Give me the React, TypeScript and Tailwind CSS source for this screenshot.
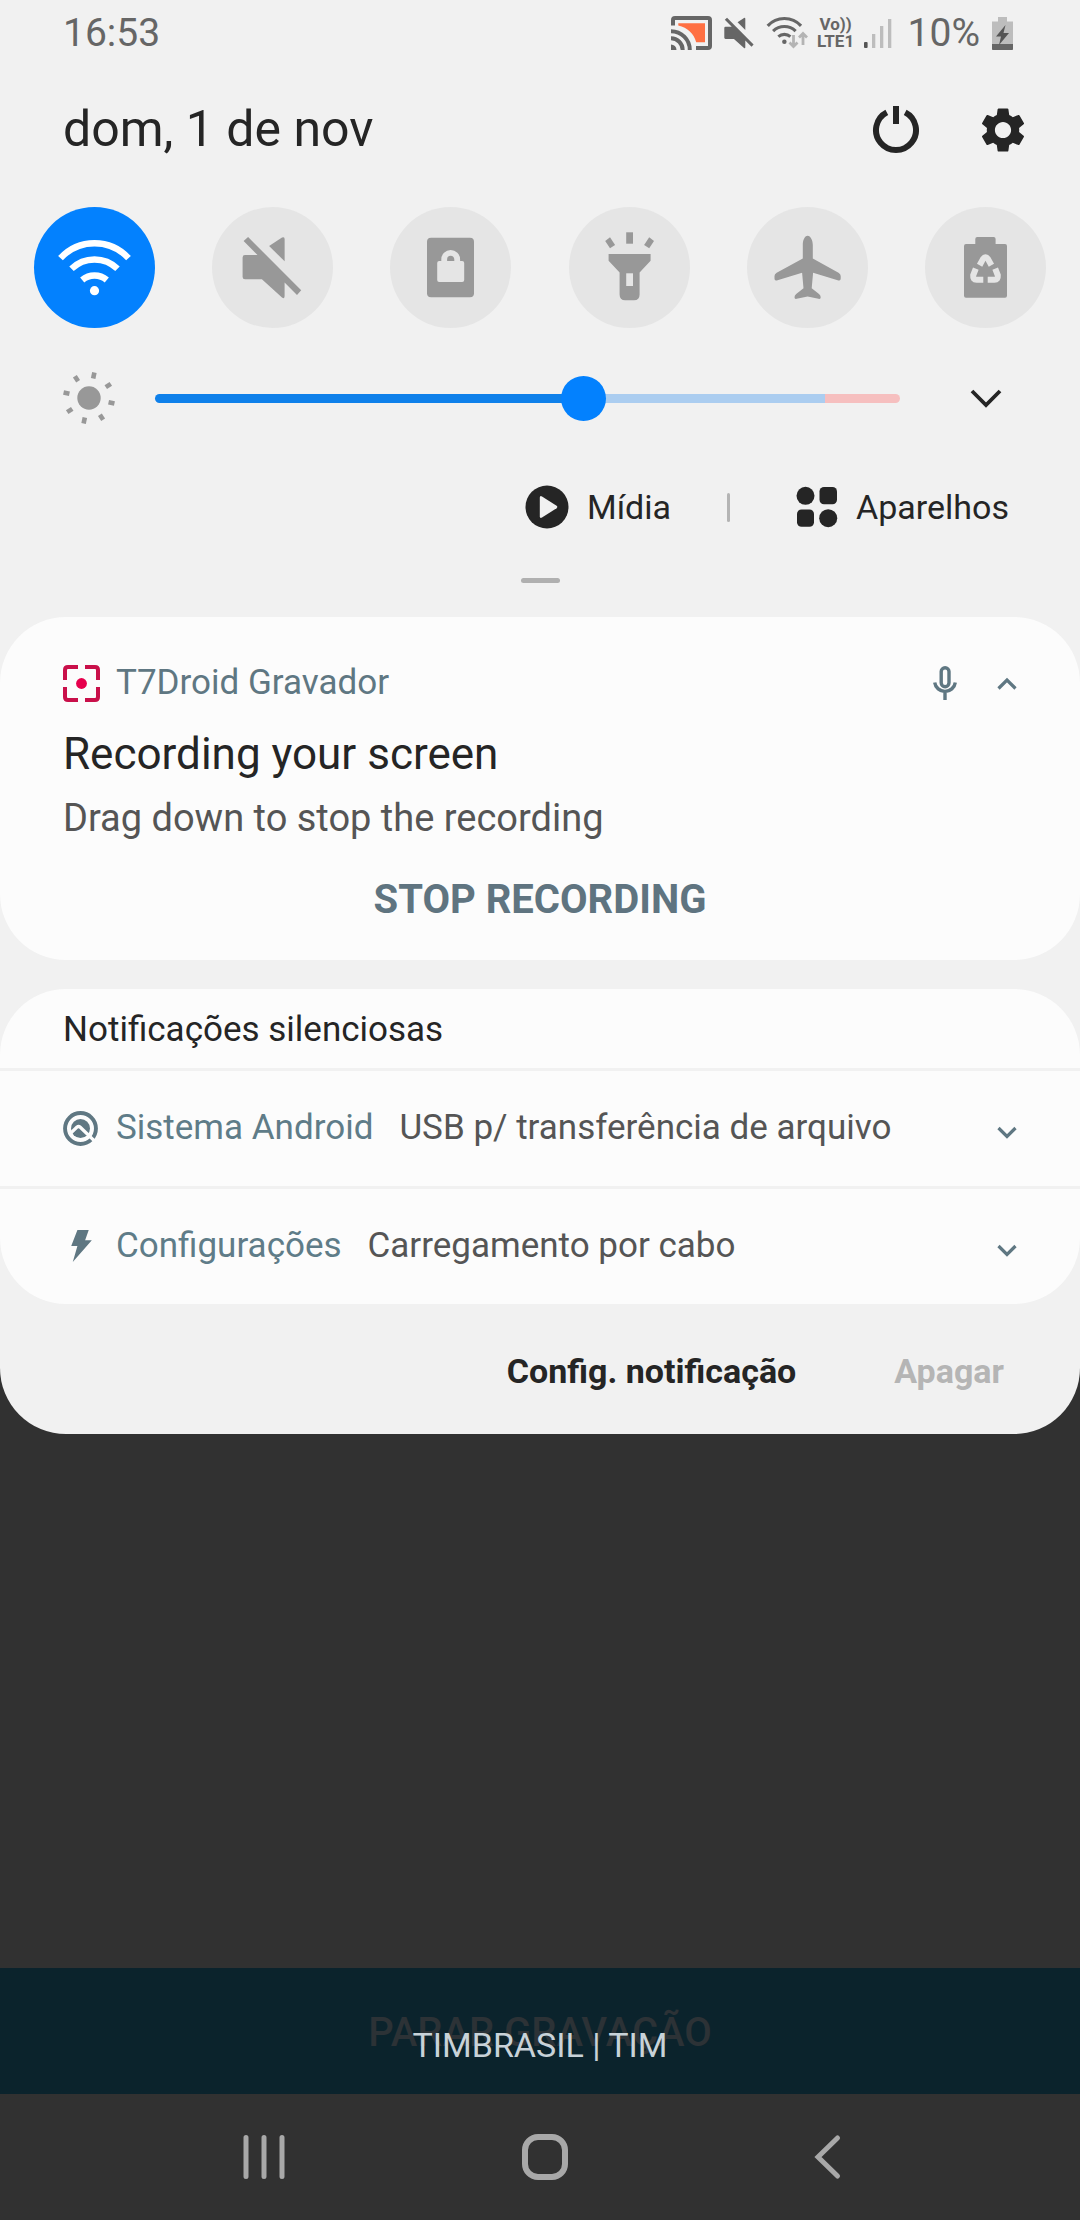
import { useState } from "react";
import { MdSettings } from "react-icons/md";

interface Tile {
    id: string;
    label: string;
    icon: React.ReactNode;
}

const WifiShape = () => (
    <>
        <g fill="none" stroke="currentColor" strokeWidth="6.4">
            <path d="M26.5 51.2A46 46 0 0 1 94.5 51.2" />
            <path d="M37.5 61.8A33 33 0 0 1 83.5 61.8" />
            <path d="M48.2 73A19 19 0 0 1 72.8 73" />
        </g>
        <circle cx="60.5" cy="83.7" r="4.6" fill="currentColor" />
    </>
);

const MuteShape = () => (
    <g fill="currentColor">
        <path d="M57.1 39L70 30.6Q72.6 29.2 72.6 32V54.3z" />
        <path d="M33 48H45.5L31.6 34L36.1 30L89.2 83.3L85 88L72.6 75.5V89Q72.6 92.4 70 90.4L49.9 72.3H33Q30.6 72.3 30.6 70V50.4Q30.6 48 33 48z" />
    </g>
);

const tiles: Tile[] = [
    { id: "wifi", label: "Wi-Fi", icon: <WifiShape /> },
    { id: "sound", label: "Mudo", icon: <MuteShape /> },
    {
        id: "rotation",
        label: "Retrato",
        icon: (
            <>
                <rect x="37" y="30.7" width="47" height="59.5" rx="4" fill="currentColor" />
                <rect x="47.2" y="54" width="27" height="21" rx="2" fill="#e5e5e5" />
                <path d="M54.2 56V52.4A6.5 6.5 0 0 1 67.2 52.4V56" fill="none" stroke="#e5e5e5" strokeWidth="5.8" />
            </>
        ),
    },
    {
        id: "torch",
        label: "Lanterna",
        icon: (
            <>
                <g fill="currentColor">
                    <path d="M39.6 47H81.6V53.7L70.6 65.5V87.5Q70.6 93.3 65 93.3H56.2Q50.6 93.3 50.6 87.5V65.5L39.6 53.7z" />
                    <path d="M57.2 25.3H64V36.7H57.2z" />
                    <path d="M36.2 34L41 30.3L46.1 38L41 41.3z" />
                    <path d="M85 34L80.2 30.3L75.1 38L80.2 41.3z" />
                </g>
                <path d="M57.2 66.3H64V79H57.2z" fill="#e5e5e5" />
            </>
        ),
    },
    {
        id: "airplane",
        label: "Modo avião",
        icon: (
            <path
                d="M60.6 28.8C63.6 28.8 65.8 33.5 65.8 38V51.4L91.5 65.8Q93.7 67.2 93.7 69V71.5Q93.7 74 91.5 73.4L66.1 65.8L64.7 81.3L72 87Q73.7 88.3 73.7 90.2Q73.7 92.4 71.5 91.8L60.6 89.6L49.7 91.8Q47.5 92.4 47.5 90.2Q47.5 88.3 49.2 87L56.5 81.3L55.1 65.8L29.7 73.4Q27.5 74 27.5 71.5V69Q27.5 67.2 29.7 65.8L55.8 51.4V38C55.8 33.5 57.6 28.8 60.6 28.8z"
                fill="currentColor"
            />
        ),
    },
    {
        id: "battery",
        label: "Economia de energia",
        icon: (
            <>
                <path
                    d="M52.3 30H68.6Q70.6 30 70.6 32V37H80Q82 37 82 39V88.7Q82 90.7 80 90.7H41Q39 90.7 39 88.7V39Q39 37 41 37H50.3V32Q50.3 30 52.3 30z"
                    fill="currentColor"
                />
                <g fill="none" stroke="#e5e5e5" strokeWidth="6">
                    <path d="M54.6 58.2L58 52Q60.5 48.4 63 52L66.4 58.2" />
                    <path d="M50.8 61.6L48.2 68.3Q47.8 72.8 51.5 72.8H58.3" />
                    <path d="M70.2 61.6L72.8 68.3Q73.2 72.8 69.5 72.8H62.7" />
                </g>
            </>
        ),
    },
];

const silent = [
    {
        app: "Sistema Android",
        text: "USB p/ transferência de arquivo",
        icon: (
            <>
                <circle cx="17" cy="17" r="15" fill="none" stroke="currentColor" strokeWidth="3.8" />
                <circle cx="17" cy="17" r="9.2" fill="currentColor" />
                <path d="M7 22L13.6 15.6Q15.2 14.4 16.8 15.8L31 29.5" fill="none" stroke="#fcfcfc" strokeWidth="3.2" />
            </>
        ),
    },
    {
        app: "Configurações",
        text: "Carregamento por cabo",
        icon: <path d="M14 1H25L21.5 11H28L9.5 32L14 16.5H8z" fill="currentColor" />,
    },
];

const Chevron = ({ up = false }: { up?: boolean }) => (
    <svg viewBox="0 0 20 20" className="size-5 text-[#5f7782]">
        <path d={up ? "M1.5 15.5L10 7L18.5 15.5" : "M1.5 9L10 17.5L18.5 9"} fill="none" stroke="currentColor" strokeWidth="3.2" />
    </svg>
);

function StatusBar() {
    return (
        <header className="flex h-[66px] items-center justify-between pl-[63px] pr-[67px] text-[39px] text-[#666]">
            <time>16:53</time>
            <div className="flex items-center">
                <svg viewBox="0 0 41 34" className="h-[34px] w-[41px]">
                    <path d="M7.3 7.3H34V26.3H25.2C23 17.5 16.5 11.5 7.3 9.4z" fill="#ff7043" />
                    <g fill="none" stroke="#666" strokeWidth="4">
                        <path d="M2 9.5V4Q2 2 4 2H37Q39 2 39 4V30Q39 32 37 32H25" />
                        <path d="M0 15.2A18.8 18.8 0 0 1 18.8 34" />
                        <path d="M0 22.3A11.7 11.7 0 0 1 11.7 34" />
                    </g>
                    <path d="M0 28.5A5.5 5.5 0 0 1 5.5 34H0z" fill="#666" />
                </svg>
                <svg viewBox="30 29 60 63" className="ml-3 h-8 w-[30px]">
                    <MuteShape />
                </svg>
                <svg viewBox="0 0 42 34" className="ml-3 h-[34px] w-[42px]">
                    <g transform="scale(.49) translate(-23 -31)">
                        <WifiShape />
                    </g>
                    <g fill="none" stroke="#b4b4b4" strokeWidth="2.8">
                        <path d="M27.5 19V30M23.5 26.5L27.5 30.5L31.5 26.5" />
                        <path d="M37 29V18M33 21.5L37 17.5L41 21.5" />
                    </g>
                </svg>
                <div className="ml-2 flex w-10 flex-col items-center text-[17px] font-bold leading-[17px]">
                    <span>Vo))</span>
                    <span>LTE1</span>
                </div>
                <svg viewBox="0 0 28 30" className="ml-2 h-[30px] w-7">
                    <rect y="24" width="3.6" height="6" rx="1" fill="#555" />
                    <path d="M8 16H11.3V30H8zM16 8H19.3V30H16zM24 1H27.3V30H24z" fill="#bdbdbd" />
                </svg>
                <span className="ml-4">10%</span>
                <svg viewBox="0 0 21 33" className="ml-3 h-[33px] w-[21px]">
                    <path d="M6 0H15V4.5H21V32Q21 33 20 33H1Q0 33 0 32V4.5H6z" fill="#bdbdbd" />
                    <path d="M0 27H21V32Q21 33 20 33H1Q0 33 0 32z" fill="#666" />
                    <path d="M13.5 8L4 19.5H9L7 28L17 16H11.5z" fill="#555" />
                </svg>
            </div>
        </header>
    );
}

export default function App() {
    const [active, setActive] = useState<string[]>(["wifi"]);
    const [brightness, setBrightness] = useState(58);

    const toggle = (id: string) => {
        setActive((prev) => (prev.includes(id) ? prev.filter((t) => t !== id) : [...prev, id]));
    };

    return (
        <div className="flex min-h-screen flex-col bg-[#313131] font-['Roboto',sans-serif] text-[#252525]">

            {/* PANEL */}
            <div className="rounded-b-[66px] bg-[#f1f1f1]">
                <StatusBar />

                <div className="flex h-[127px] items-center justify-between pl-[63px] pr-[50px]">
                    <h1 className="text-[50px]">dom, 1 de nov</h1>
                    <div className="flex items-center gap-14">
                        <button aria-label="Desligar">
                            <svg viewBox="0 0 48 48" className="size-12">
                                <path d="M14.8 6.3A20 20 0 1 0 33.2 6.3" fill="none" stroke="currentColor" strokeWidth="6" />
                                <path d="M21 0H27V18H21z" fill="currentColor" />
                            </svg>
                        </button>
                        <button aria-label="Configurações">
                            <MdSettings className="size-[54px]" />
                        </button>
                    </div>
                </div>

                {/* QUICK SETTINGS */}
                <div className="mt-[14px] flex justify-between px-[34px]">
                    {tiles.map((tile) => (
                        <button
                            key={tile.id}
                            aria-label={tile.label}
                            aria-pressed={active.includes(tile.id)}
                            onClick={() => toggle(tile.id)}
                            className={`size-[121px] rounded-full ${active.includes(tile.id) ? "bg-[#0381fe] text-white" : "bg-[#e5e5e5] text-[#989898]"
                                }`}
                        >
                            <svg viewBox="0 0 121 121" className="size-full">{tile.icon}</svg>
                        </button>
                    ))}
                </div>

                {/* BRIGHTNESS */}
                <div className="flex h-[140px] items-center pl-[62px] pr-[78px]">
                    <svg viewBox="-27 -27 54 54" className="size-[54px] shrink-0 text-[#989898]">
                        <circle r="11.7" fill="currentColor" />
                        <g fill="currentColor">
                            {[12, 57, 102, 147, 192, 237, 282, 327].map((deg) => (
                                <rect key={deg} x="-2.3" y="-26" width="4.6" height="6" transform={`rotate(${deg})`} />
                            ))}
                        </g>
                    </svg>
                    <input
                        type="range"
                        aria-label="Brilho"
                        value={brightness}
                        onChange={(e) => setBrightness(Number(e.target.value))}
                        style={{ "--level": `${brightness}%` } as React.CSSProperties}
                        className="ml-[39px] h-11 min-w-0 flex-1 appearance-none bg-transparent
                        [&::-webkit-slider-runnable-track]:h-[9px] [&::-webkit-slider-runnable-track]:rounded-full
                        [&::-webkit-slider-runnable-track]:bg-[linear-gradient(to_right,#0f80ea_var(--level),#abcdf0_var(--level),#abcdf0_90%,#f6bfbf_90%)]
                        [&::-webkit-slider-thumb]:-mt-[18px] [&::-webkit-slider-thumb]:size-[45px] [&::-webkit-slider-thumb]:appearance-none
                        [&::-webkit-slider-thumb]:rounded-full [&::-webkit-slider-thumb]:bg-[#0381fe]"
                    />
                    <button aria-label="Expandir" className="ml-[70px]">
                        <svg viewBox="0 0 32 20" className="h-5 w-8">
                            <path d="M2 3L16 17L30 3" fill="none" stroke="currentColor" strokeWidth="3.8" />
                        </svg>
                    </button>
                </div>

                {/* MEDIA / DEVICES */}
                <div className="flex h-[78px] items-center justify-end pr-[71px] text-[34px]">
                    <button className="flex items-center gap-[18px]">
                        <svg viewBox="0 0 44 44" className="size-11">
                            <circle cx="22" cy="22" r="21.5" fill="currentColor" />
                            <path d="M14.8 12.8Q14.8 10.2 17 11.4L31.6 20.8Q33 22 31.6 23.2L17 32.6Q14.8 33.8 14.8 31.2z" fill="#f1f1f1" />
                        </svg>
                        Mídia
                    </button>
                    <span className="ml-14 h-[29px] w-[3px] rounded-full bg-[#b4b4b4]" />
                    <button className="ml-[66px] flex items-center gap-[18px]">
                        <svg viewBox="0 0 42 42" className="size-[42px]" fill="currentColor">
                            <circle cx="9.5" cy="9.8" r="9" />
                            <rect x="23.5" y="1" width="17.5" height="17.2" rx="4.5" />
                            <rect x="1" y="23.5" width="17" height="17.2" rx="4.5" />
                            <circle cx="32.2" cy="32.2" r="9" />
                        </svg>
                        Aparelhos
                    </button>
                </div>

                <div className="mx-auto mb-[34px] mt-8 h-[5px] w-[39px] rounded-full bg-[#b0b0b0]" />

                {/* RECORDER */}
                <section className="rounded-[66px] bg-[#fcfcfc] px-[63px] pb-[30px] pt-[47px]">
                    <div className="flex h-[38px] items-center text-[35px] text-[#5f7782]">
                        <svg viewBox="0 0 37 37" className="size-[37px]">
                            <path
                                d="M15 2H5Q2 2 2 5V15M22 2H32Q35 2 35 5V15M2 22V32Q2 35 5 35H15M35 22V32Q35 35 32 35H22"
                                fill="none"
                                stroke="#c9104a"
                                strokeWidth="4"
                            />
                            <circle cx="18.5" cy="18.5" r="5.4" fill="#e6004c" />
                        </svg>
                        <span className="ml-4 flex-1">T7Droid Gravador</span>
                        <svg viewBox="0 0 24 34" className="h-[34px] w-6" fill="none" stroke="currentColor" strokeWidth="3.4">
                            <rect x="8.2" y="1.7" width="7.8" height="19" rx="3.9" />
                            <path d="M1.7 16.5A10.4 10.4 0 0 0 22.3 16.5M12 25.5V34" />
                        </svg>
                        <button aria-label="Recolher" className="ml-10">
                            <Chevron up />
                        </button>
                    </div>
                    <h2 className="mt-6 text-[44px] leading-[56px]">Recording your screen</h2>
                    <p className="mt-3 text-[38px] leading-[48px] text-[#555]">Drag down to stop the recording</p>
                    <button className="mt-7 h-[60px] w-full text-[40px] font-bold text-[#5f7480]">STOP RECORDING</button>
                </section>

                {/* SILENT NOTIFICATIONS */}
                <section className="mt-[29px] overflow-hidden rounded-[66px] bg-[#fcfcfc] text-[35px]">
                    <h2 className="flex h-[79px] items-center px-[63px] pt-[3px]">Notificações silenciosas</h2>
                    {silent.map((item) => (
                        <div key={item.app} className="flex h-[118px] items-center border-t-[3px] border-[#f1f1f1] px-[63px]">
                            <svg viewBox="0 0 34 34" className="size-[35px] text-[#5f7782]">{item.icon}</svg>
                            <span className="ml-[18px] text-[#5f7c88]">{item.app}</span>
                            <span className="ml-[26px] flex-1 text-[#555]">{item.text}</span>
                            <button aria-label="Expandir">
                                <Chevron />
                            </button>
                        </div>
                    ))}
                </section>

                <div className="flex h-[130px] items-center justify-end gap-[98px] pr-[76px] pt-1 text-[34px] font-bold">
                    <button>Config. notificação</button>
                    <button className="text-[#b5b5b5]">Apagar</button>
                </div>
            </div>

            {/* CARRIER */}
            <div className="relative mt-auto flex h-[126px] items-center justify-center bg-[#0b232c]">
                <span className="pt-[3px] text-[40px] font-medium text-[#2c3236]">PARAR GRAVAÇÃO</span>
                <span className="absolute inset-x-0 top-14 text-center text-[34px] leading-[42px] text-[#c8d2d8]">TIMBRASIL | TIM</span>
            </div>

            {/* NAVIGATION */}
            <nav className="flex h-[126px] items-center justify-between pl-[22%] pr-[21%] text-[#a8a8a8]">
                <button aria-label="Recentes">
                    <svg viewBox="0 0 48 48" className="size-12">
                        <path d="M8 4.5V43.5M26 4.5V43.5M44 4.5V43.5" stroke="currentColor" strokeWidth="5" strokeLinecap="round" />
                    </svg>
                </button>
                <button aria-label="Início">
                    <svg viewBox="0 0 48 48" className="size-12">
                        <rect x="4" y="4" width="40" height="40" rx="13" fill="none" stroke="currentColor" strokeWidth="6" />
                    </svg>
                </button>
                <button aria-label="Voltar">
                    <svg viewBox="0 0 48 48" className="size-12">
                        <path d="M32.5 5L13 24L32.5 43" fill="none" stroke="currentColor" strokeWidth="5" strokeLinecap="round" />
                    </svg>
                </button>
            </nav>
        </div>
    );
}
